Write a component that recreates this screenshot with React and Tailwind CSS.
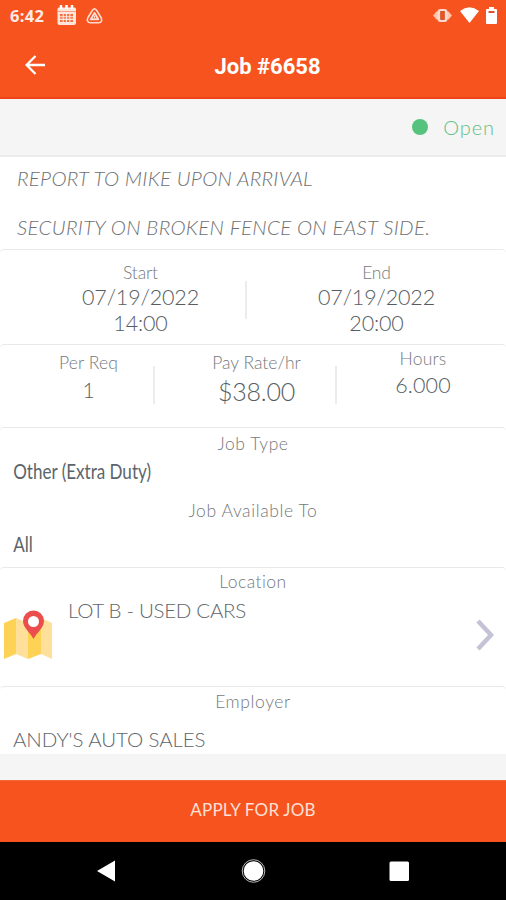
import React from 'react';

const Label = ({ children, className = '' }) => (
  <div className={`text-center text-[17.5px] leading-[22px] text-[#75797c] ${className}`}>{children}</div>
);

const StatusBar = () => (
  <div className="flex h-8 items-center justify-between pl-[10px] pr-[8px] pb-px">
    <div className="flex items-center text-[#ffece5]">
      <span className="w-[36px] font-['Open_Sans'] text-[16.5px] font-bold leading-[20px] tracking-[0.3px]">6:42</span>
      <svg className="ml-[10px] mb-px" width="21" height="21" viewBox="0 0 21 21" fill="none">
        <path d="M3 2.5h15.5a1.5 1.5 0 0 1 1.5 1.500v14a2 2 0 0 1-2 2H3.500a2 2 0 0 1-2-2v-14a1.500 1.500 0 0 1 1.500-1.500z" fill="#ffe6dc" />
        <path d="M1.500 6.500h18.500" stroke="#f9a183" strokeWidth="1" />
        <path d="M5 0v4M10.500 0v4M16 0v4" stroke="#fff" strokeWidth="2.500" />
        <path d="M4 9h13v8H4z" fill="#f4703f" />
        <path d="M4 11.700h13M4 14.400h13M7.200 9v8M10.500 9v8M13.800 9v8" stroke="#ffe6dc" strokeWidth="1.100" />
      </svg>
      <svg className="ml-[9px]" width="17" height="16" viewBox="0 0 17 16" fill="none" stroke="#ffdccf" strokeLinejoin="round">
        <path d="M6.500 2.200Q8.500-.4 10.500 2.200L15.300 10Q16.800 14.500 12.600 14.800H4.400Q.2 14.500 1.700 10z" strokeWidth="1.600" />
        <path d="M8.500 5L4.800 11.300h7.400z" strokeWidth="2" />
        <path d="M8.500 8v2" strokeWidth="1" />
      </svg>
    </div>
    <div className="flex items-center">
      <svg width="19" height="15" viewBox="0 0 19 15" fill="none">
        <path d="M0 7.500L3.500 3.500H15.500L19 7.500L15.500 11.500H3.500z" fill="#ffc2ab" />
        <rect x="4.500" y="1" width="10" height="13" rx="3" fill="#ffd9cb" />
        <rect x="7.700" y="3.500" width="3.600" height="8" fill="#f4511e" stroke="#c94a22" strokeWidth=".8" />
      </svg>
      <svg className="mb-px ml-[8px]" width="19" height="16" viewBox="0 0 19 16" fill="#fff">
        <path d="M0 4Q9.500-3.300 19 4L9.500 16z" />
      </svg>
      <svg className="ml-[7px] mr-px" width="11" height="17" viewBox="0 0 11 17">
        <path d="M3 0h5v2h2a1 1 0 0 1 1 1v13a1 1 0 0 1-1 1H1a1 1 0 0 1-1-1V3a1 1 0 0 1 1-1h2z" fill="#fff" />
        <rect x="2.500" y="4" width="6" height="2" rx=".5" fill="#e2502c" />
      </svg>
    </div>
  </div>
);

const Header = () => (
  <header className="h-[99px] border-b-2 border-[#ec4418] bg-[#f6531f]">
    <StatusBar />
    <div className="grid h-[66px] grid-cols-[60px_1fr_31px] items-center">
      <svg className="ml-[25px]" width="20" height="20" viewBox="0 0 20 20" fill="none" stroke="#fff" strokeWidth="2.300">
        <path d="M20 10H2M10.500 1L1.600 10L10.500 19" />
      </svg>
      <h1 className="pt-[3px] text-center font-[Roboto] text-[22px] font-bold leading-[26px] text-white">
        Job #6658
      </h1>
    </div>
  </header>
);

const Schedule = ({ label, date, time, className = '' }) => (
  <div className={`pt-[12px] text-center text-[21.5px] tracking-[-0.15px] text-[#565d62] ${className}`}>
    <Label>{label}</Label>
    <div className="leading-[26px]">{date}</div>
    <div className="leading-[27px]">{time}</div>
  </div>
);

const MapIcon = () => (
  <svg width="50" height="52" viewBox="0 0 50 52">
    <path d="M1 13L13 8V44L1 49z" fill="#fdd255" />
    <path d="M13 8L25 13V49L13 44z" fill="#fee09a" />
    <path d="M25 13L38 8V44L25 49z" fill="#fdd255" />
    <path d="M38 8L49 13V49L38 44z" fill="#fee09a" />
    <path d="M30.500 29C28 23.500 20 18 20 11a10.500 10.500 0 0 1 21 0C41 18 33 23.500 30.500 29z" fill="#ec4d4d" />
    <circle cx="30.500" cy="11.500" r="5.500" fill="#fff" />
  </svg>
);

const App = () => (
  <div className="h-[900px] w-[506px] overflow-hidden bg-white font-['Lato',sans-serif] font-light">
    <Header />

    <div className="flex h-[58px] items-center justify-end border-b-2 border-[#ececec] bg-[#f5f5f5] pr-[11px]">
      <span className="h-4 w-4 rounded-full bg-[#55c37d]" />
      <span className="ml-[15px] text-[20px] leading-[24px] tracking-[0.9px] text-[#64bd87]">Open</span>
    </div>

    <section className="flex h-[92px] flex-col justify-center pl-[17px] text-[20.5px] italic leading-[49px] text-[#6d7072]">
      <p className="whitespace-nowrap tracking-[0.25px]">REPORT TO MIKE UPON ARRIVAL</p>
      <p className="whitespace-nowrap tracking-[0.3px]">SECURITY ON BROKEN FENCE ON EAST SIDE.</p>
    </section>

    <section className="grid h-[95px] grid-cols-[245px_2px_1fr] rounded-[4px] border-t border-[#e9e9e9]">
      <Schedule label="Start" date="07/19/2022" time="14:00" className="pl-[36px]" />
      <div className="mt-[31px] h-[38px] bg-[#ececec]" />
      <Schedule label="End" date="07/19/2022" time="20:00" />
    </section>

    <section className="grid h-[83px] grid-cols-[153px_2px_180px_2px_1fr] rounded-[4px] border-t border-[#e9e9e9] text-center text-[#565d62]">
      <div className="pl-[24px] pt-[7px]">
        <Label className="tracking-[0.1px]">Per Req</Label>
        <div className="text-[21px] leading-[32px]">1</div>
      </div>
      <div className="mt-[21px] h-[38px] bg-[#ececec]" />
      <div className="pl-[23px] pt-[7px]">
        <Label>Pay Rate/hr</Label>
        <div className="text-[25px] leading-[35px] tracking-[-0.2px]">$38.00</div>
      </div>
      <div className="mt-[21px] h-[38px] bg-[#ececec]" />
      <div className="pl-[3px] pt-[3px]">
        <Label className="tracking-[0.2px]">Hours</Label>
        <div className="text-[21.5px] leading-[31px] tracking-[0.1px]">6.000</div>
      </div>
    </section>

    <section className="h-[140px] rounded-[4px] border-t border-[#e9e9e9] pt-[5px]">
      <Label className="tracking-[0.55px]">Job Type</Label>
      <p className="origin-left scale-x-[0.775] pl-[17px] text-[22px] font-normal leading-[31px] text-[#5b656b]">Other (Extra Duty)</p>
      <Label className="mt-[14px] tracking-[0.6px]">Job Available To</Label>
      <p className="origin-left scale-x-[0.775] pl-[17px] text-[22px] font-normal leading-[43px] text-[#5b656b]">All</p>
    </section>

    <section className="h-[119px] rounded-[4px] border-t border-[#e9e9e9] pt-[3px]">
      <Label className="tracking-[0.45px]">Location</Label>
      <div className="flex pl-[3px] pr-[11px]">
        <div className="pt-[17px]">
          <MapIcon />
        </div>
        <p className="ml-[15px] flex-1 pt-[2px] text-[20.5px] leading-[30px] tracking-[-0.3px] text-[#606569]">LOT B - USED CARS</p>
        <svg className="mt-[26px]" width="19" height="32" viewBox="0 0 19 32" fill="none" stroke="#c4c3d6" strokeWidth="4.500">
          <path d="M2 2L15 16L2 30" />
        </svg>
      </div>
    </section>

    <section className="h-[68px] rounded-t-[4px] border-t border-[#e9e9e9] pt-[4px]">
      <Label className="tracking-[0.6px]">Employer</Label>
      <p className="pl-[13px] pt-[11px] text-[20.5px] leading-[30px] tracking-[-0.1px] text-[#606569]">ANDY'S AUTO SALES</p>
    </section>

    <div className="h-[26px] bg-[#f5f5f5]" />

    <button className="flex h-[62px] w-full items-center justify-center border-t border-[#f4673b] bg-[#f6531f] pb-[3px] text-[17px] font-normal tracking-[0.2px] text-[#ffe0d5]">
      APPLY FOR JOB
    </button>

    <nav className="h-[58px] bg-black">
      <svg width="506" height="58" viewBox="0 0 506 58" fill="#fff">
        <path d="M97 29L115 18.500V39.500z" />
        <circle cx="253.500" cy="29" r="11.300" fill="none" stroke="#bbb" strokeWidth="1" />
        <circle cx="253.500" cy="29" r="9.800" />
        <rect x="389.500" y="19.500" width="19.500" height="19.500" rx="1.500" />
      </svg>
    </nav>
  </div>
);

export default App;
